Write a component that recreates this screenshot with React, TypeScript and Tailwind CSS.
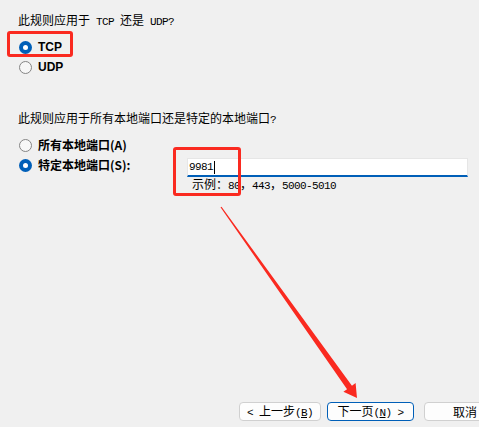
import React from "react";

const A = ({ children }: { children: React.ReactNode }) => (
  <span className="font-['Liberation_Mono',monospace] text-[11px] tracking-[-0.6px]">{children}</span>
);

const Radio = ({ checked }: { checked?: boolean }) =>
  checked ? (
    <span className="w-[13px] h-[13px] rounded-full bg-[#005fb8] flex items-center justify-center shrink-0">
      <span className="w-[5px] h-[5px] rounded-full bg-white" />
    </span>
  ) : (
    <span className="w-[13px] h-[13px] rounded-full border border-[#858585] bg-[#f7f7f7] shrink-0" />
  );

const RadioRow = ({ checked, children }: { checked?: boolean; children: React.ReactNode }) => (
  <div className="h-[20px] flex items-center gap-[6px] pl-[1px]">
    <Radio checked={checked} />
    {children}
  </div>
);

const Btn = ({ w, focus, children }: { w: string; focus?: boolean; children: React.ReactNode }) => (
  <div
    className={
      "h-[19px] shrink-0 rounded-[4px] bg-[#fdfdfd] flex items-center justify-center leading-none " +
      w +
      (focus ? " border border-[#005fb8]" : " border border-[#d0d0d0]")
    }
  >
    {children}
  </div>
);

export default function App() {
  return (
    <div className="relative w-[479px] h-[427px] overflow-hidden bg-[#f0f0f0] flex flex-col text-[12px] text-black font-['Noto_Sans_CJK_SC',sans-serif]">
      <div className="pl-[18px] pt-[12px] flex flex-col">
        <div className="h-[16px] leading-[16px] whitespace-pre">
          此规则应用于<A> TCP </A>还是<A> UDP?</A>
        </div>
        <div className="mt-[9px] flex flex-col">
          <RadioRow checked>
            <span className="font-['Liberation_Sans',sans-serif] font-bold text-[12px]">TCP</span>
          </RadioRow>
          <RadioRow>
            <span className="font-['Liberation_Sans',sans-serif] font-bold text-[12px]">UDP</span>
          </RadioRow>
        </div>
      </div>

      <div className="pl-[18px] mt-[33px] flex flex-col">
        <div className="h-[16px] leading-[16px] whitespace-pre">
          此规则应用于所有本地端口还是特定的本地端口<A>?</A>
        </div>
        <div className="mt-[9px]">
          <RadioRow>
            <span className="font-bold">所有本地端口(A)</span>
          </RadioRow>
        </div>
        <div className="flex">
          <div className="w-[169px] shrink-0">
            <RadioRow checked>
              <span className="font-bold">特定本地端口(S):</span>
            </RadioRow>
          </div>
          <div className="w-[281px] flex flex-col">
            <div className="mt-[3px] h-[19px] bg-white border border-[#e6e6e6] border-b-[2px] border-b-[#005fb8] flex items-center pl-[1px]">
              <A>9981</A>
              <span className="w-[1px] h-[13px] bg-black ml-[1px]" />
            </div>
            <div className="pl-[5px] h-[14px] leading-[14px] whitespace-pre">
              示例：<A>80</A>，<A>443</A>，<A>5000-5010</A>
            </div>
          </div>
        </div>
      </div>

      <div className="mt-auto mb-[6px] pl-[239px] flex">
        <Btn w="w-[82px]">
          <span className="whitespace-pre">
            <A>{"< "}</A>上一步<A>(<span className="underline">B</span>)</A>
          </span>
        </Btn>
        <div className="w-[6px] shrink-0" />
        <Btn w="w-[87px]" focus>
          <span className="whitespace-pre">
            下一页<A>(<span className="underline">N</span>) {">"}</A>
          </span>
        </Btn>
        <div className="w-[10px] shrink-0" />
        <Btn w="w-[82px]">
          <span>取消</span>
        </Btn>
      </div>

      {/* annotations */}
      <div className="absolute left-[7px] top-[31px] w-[66px] h-[26px] border-[3px] border-[#fa2a20] rounded-[3px]" />
      <div className="absolute left-[173px] top-[147px] w-[68px] h-[49px] border-[3px] border-[#fa2a20] rounded-[3px]" />
      <svg className="absolute inset-0 pointer-events-none" width="479" height="427" viewBox="0 0 479 427">
        <polygon
          fill="#fa2a20"
          points="220.5,207.35 347.05,389.14 343.4,391.8 357,398 355.6,383 351.95,385.66 221.5,206.65"
        />
      </svg>
    </div>
  );
}
